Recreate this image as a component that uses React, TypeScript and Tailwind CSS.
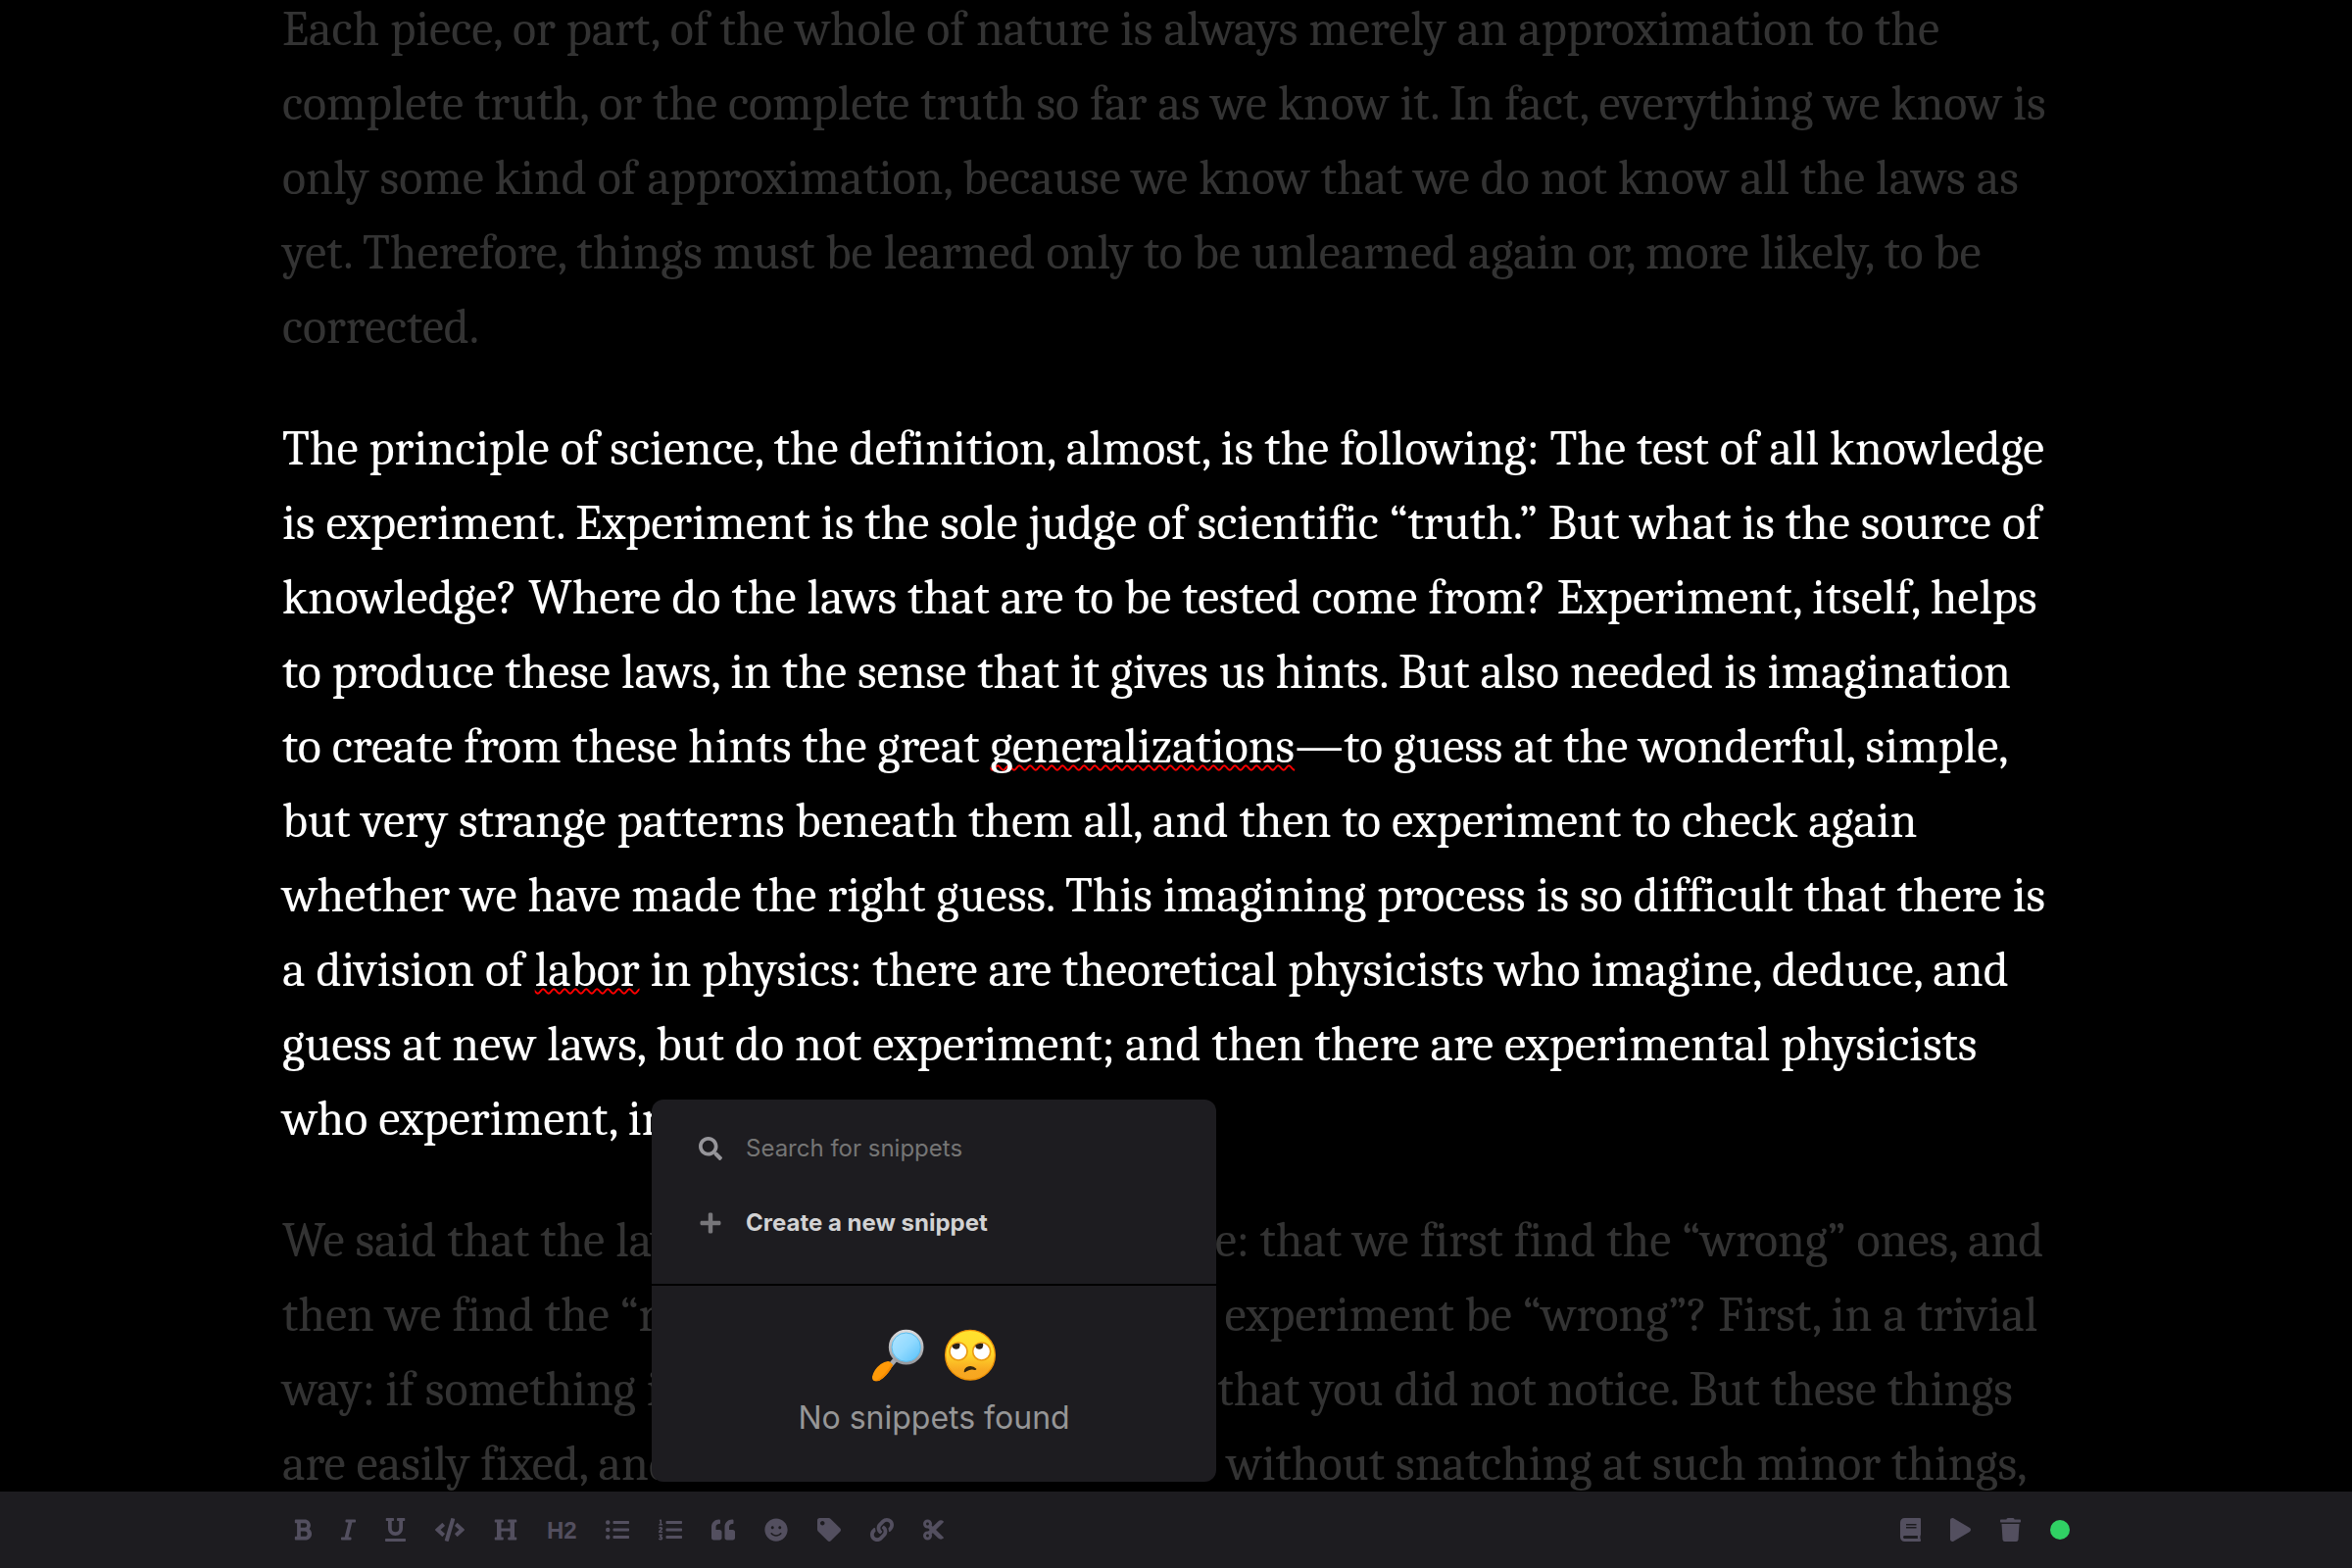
import { Fragment, type ReactNode } from "react";
import {
  FaBold, FaItalic, FaUnderline, FaCode, FaHeading, FaListUl, FaListOl, FaQuoteLeft, FaSmile,
  FaTag, FaLink, FaCut, FaBook, FaPlay, FaTrash, FaSearch, FaPlus,
} from "react-icons/fa";

function Misspelled({ children }: { children: ReactNode }) {
  return (
    <span className="underline decoration-[#ff0000] decoration-wavy decoration-2 underline-offset-2 [text-decoration-skip-ink:none]">
      {children}
    </span>
  );
}

function Paragraph({ lines, dim = false }: { lines: ReactNode[]; dim?: boolean }) {
  return (
    <p className={dim ? "text-[#333333]" : "text-white"}>
      {lines.map((line, i) => (
        <Fragment key={i}>
          {i > 0 && <br />}
          {line}
        </Fragment>
      ))}
    </p>
  );
}

const before: ReactNode[] = [
  "Each piece, or part, of the whole of nature is always merely an approximation to the",
  "complete truth, or the complete truth so far as we know it. In fact, everything we know is",
  "only some kind of approximation, because we know that we do not know all the laws as",
  "yet. Therefore, things must be learned only to be unlearned again or, more likely, to be",
  "corrected.",
];

const current: ReactNode[] = [
  "The principle of science, the definition, almost, is the following: The test of all knowledge",
  "is experiment. Experiment is the sole judge of scientific “truth.” But what is the source of",
  "knowledge? Where do the laws that are to be tested come from? Experiment, itself, helps",
  "to produce these laws, in the sense that it gives us hints. But also needed is imagination",
  <>to create from these hints the great <Misspelled>generalizations</Misspelled>—to guess at the wonderful, simple,</>,
  "but very strange patterns beneath them all, and then to experiment to check again",
  "whether we have made the right guess. This imagining process is so difficult that there is",
  <>a division of <Misspelled>labor</Misspelled> in physics: there are theoretical physicists who imagine, deduce, and</>,
  "guess at new laws, but do not experiment; and then there are experimental physicists",
  "who experiment, imagine, deduce, and guess.",
];

const after: ReactNode[] = [
  "We said that the laws of nature are approximate: that we first find the “wrong” ones, and",
  "then we find the “right” ones. Now, how can an experiment be “wrong”? First, in a trivial",
  "way: if something is wrong with the apparatus that you did not notice. But these things",
  "are easily fixed, and checked back and forth. So without snatching at such minor things,",
];

const formatting: { label: string; icon: ReactNode }[] = [
  { label: "Bold", icon: <FaBold className="h-6 w-[18px]" /> },
  { label: "Italic", icon: <FaItalic className="h-6 w-[15px]" /> },
  { label: "Underline", icon: <FaUnderline className="h-6 w-[21px]" /> },
  { label: "Code", icon: <FaCode className="h-6 w-[30px]" /> },
  { label: "Heading", icon: <FaHeading className="size-6" /> },
  { label: "Heading 2", icon: <span className="block w-[30px] pt-0.5 font-['Liberation_Sans',sans-serif] text-2xl leading-6 font-bold">H2</span> },
  { label: "Bulleted list", icon: <FaListUl className="size-6" /> },
  { label: "Numbered list", icon: <FaListOl className="size-6" /> },
  { label: "Quote", icon: <FaQuoteLeft className="size-6" /> },
  { label: "Emoji", icon: <FaSmile className="size-6" /> },
  { label: "Tag", icon: <FaTag className="size-6" /> },
  { label: "Link", icon: <FaLink className="size-6" /> },
  { label: "Snippets", icon: <FaCut className="h-6 w-[21px]" /> },
];

const actions: { label: string; icon: ReactNode }[] = [
  { label: "Notebook", icon: <FaBook className="h-6 w-[21px]" /> },
  { label: "Play", icon: <FaPlay className="h-6 w-[21px]" /> },
  { label: "Delete", icon: <FaTrash className="h-6 w-[21px]" /> },
  { label: "Status", icon: <span className="block size-5 rounded-full bg-[#30d164]" /> },
];

function MagnifierEmoji() {
  return (
    <svg viewBox="25 22 162 162" className="size-[54px]" aria-hidden="true">
      <defs>
        <linearGradient id="glass" x1="0" y1="0" x2="1" y2="1">
          <stop offset="0" stopColor="#b5e6ff" />
          <stop offset="0.5" stopColor="#92daff" />
          <stop offset="1" stopColor="#4fbdf8" />
        </linearGradient>
        <linearGradient id="rim" x1="0" y1="0" x2="0" y2="1">
          <stop offset="0" stopColor="#d9d9db" />
          <stop offset="1" stopColor="#98999d" />
        </linearGradient>
      </defs>
      <path d="M98 117 L83 134" stroke="#a9a9ad" strokeWidth="15" />
      <path d="M76 121 Q85 122 91 133 Q81 155 62 172 Q50 183 38 182 Q27 180 28 168 Q34 145 54 130 Q65 122 76 121Z" fill="#ff9a08" />
      <path d="M91 133 Q81 155 62 172 Q50 183 38 182 Q66 166 88 129Z" fill="#f58a00" />
      <circle cx="132" cy="78" r="49" fill="url(#glass)" stroke="url(#rim)" strokeWidth="9" />
      <circle cx="132" cy="78" r="44" fill="none" stroke="#5cbcec" strokeWidth="3" />
    </svg>
  );
}

function EyeRollEmoji() {
  return (
    <svg viewBox="247 24 162 162" className="size-[54px]" aria-hidden="true">
      <defs>
        <linearGradient id="skin" x1="0" y1="0" x2="0" y2="1">
          <stop offset="0" stopColor="#ffe22e" />
          <stop offset="0.45" stopColor="#ffd92b" />
          <stop offset="0.8" stopColor="#f8a921" />
          <stop offset="1" stopColor="#f7a51f" />
        </linearGradient>
      </defs>
      <circle cx="328" cy="104" r="76" fill="url(#skin)" stroke="#ee9208" strokeWidth="4" />
      <circle cx="292" cy="93" r="27" fill="#ffffff" stroke="#ea9a12" strokeWidth="5" />
      <circle cx="363" cy="93" r="27" fill="#ffffff" stroke="#ea9a12" strokeWidth="5" />
      <path d="M273 74 Q284 66 296 69 Q299 77 294 83 Q286 89 277 84 Q272 79 273 74Z" fill="#2a2117" />
      <path d="M344 74 Q355 66 367 69 Q370 77 365 83 Q357 89 348 84 Q343 79 344 74Z" fill="#2a2117" />
      <path d="M309 155 Q310 143 323 139 Q337 136 347 146 Q348 150 342 150 Q330 146 317 154 Q310 159 309 155Z" fill="#33250f" />
    </svg>
  );
}

function SnippetMenu() {
  return (
    <section
      aria-label="Snippets"
      className="absolute bottom-full left-[665px] mb-2.5 w-[576px] rounded-xl bg-[#1d1c20]"
    >
      <div className="border-b-2 border-black px-12 pt-3 pb-6">
        <label className="flex h-[76px] items-center gap-6">
          <FaSearch className="size-6 text-[#96959a]" />
          <input
            type="text"
            aria-label="Search for snippets"
            placeholder="Search for snippets"
            className="min-w-0 flex-1 bg-transparent text-2xl text-white outline-none placeholder:text-[#757575]"
          />
        </label>
        <button type="button" className="flex h-[76px] w-full items-center gap-6 text-left">
          <FaPlus className="size-6 text-[#77767a]" />
          <span className="text-2xl font-bold text-[#d2d2d3]">Create a new snippet</span>
        </button>
      </div>
      <div className="flex h-[200px] flex-col items-center pt-11 text-[#969697]">
        <div className="flex gap-5">
          <MagnifierEmoji />
          <EyeRollEmoji />
        </div>
        <p className="mt-1.5 text-[32px] leading-[62px]">No snippets found</p>
      </div>
    </section>
  );
}

export default function App() {
  return (
    <div className="flex h-screen flex-col bg-black font-['Inter',sans-serif]">
      <main className="min-h-0 flex-1 overflow-hidden px-[12%]">
        <article className="-mt-2 flex flex-col gap-12 font-['Cambria','Caladea','Liberation_Serif',serif] text-[50px] leading-[76px] whitespace-nowrap">
          <Paragraph dim lines={before} />
          <Paragraph lines={current} />
          <Paragraph dim lines={after} />
        </article>
      </main>
      <footer className="relative flex h-[78px] shrink-0 items-center justify-between bg-[#1d1c20] px-[12%] text-[#534f5f]">
        <div className="flex items-center gap-[30px] pl-3">
          {formatting.map(({ label, icon }) => (
            <button key={label} type="button" aria-label={label}>{icon}</button>
          ))}
        </div>
        <div className="flex items-center gap-[30px]">
          {actions.map(({ label, icon }) => (
            <button key={label} type="button" aria-label={label}>{icon}</button>
          ))}
        </div>
        <SnippetMenu />
      </footer>
    </div>
  );
}
